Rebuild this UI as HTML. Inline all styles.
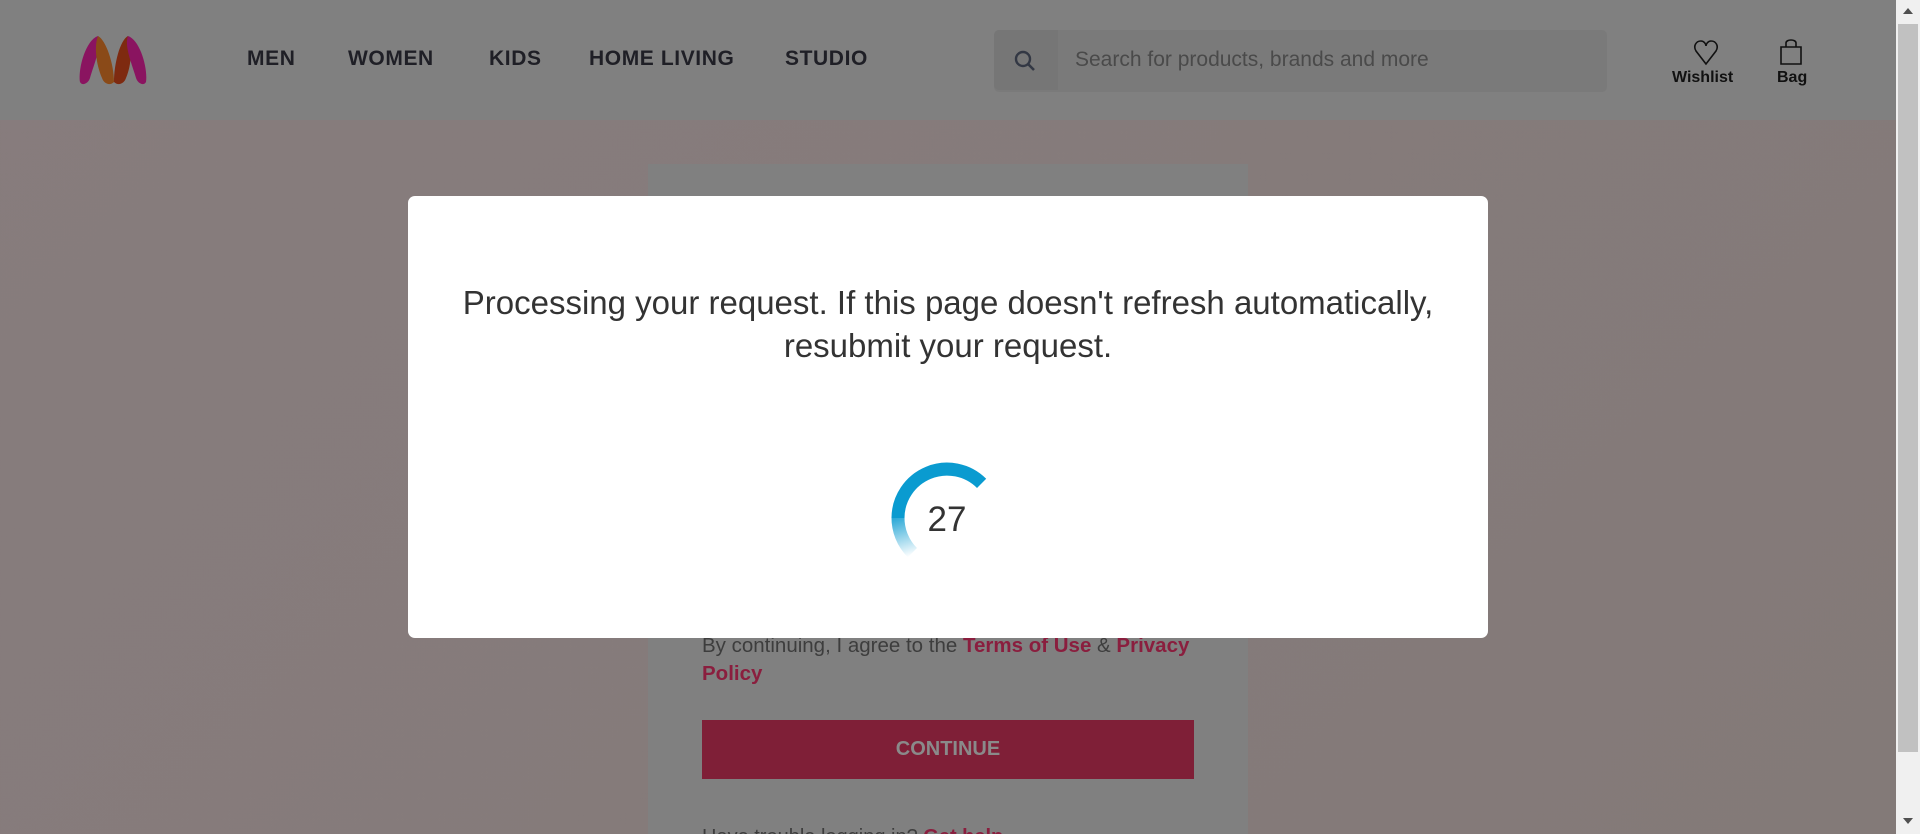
<!DOCTYPE html>
<html style="margin:0;height:834px;overflow:hidden"><head><meta charset="utf-8"><style>
body{margin:0;width:1920px;height:834px;overflow:hidden;position:relative;font-family:"Liberation Sans",sans-serif;background:linear-gradient(135deg,#877c7d,#837a78);}
.hdr{position:absolute;left:0;top:0;width:1896px;height:120px;background:#808080;}
.nav{position:absolute;top:47px;font-size:21px;color:#1f1f26;letter-spacing:0.6px;font-weight:bold}
.srch{position:absolute;left:994px;top:30px;width:613px;height:62px;background:#7a7a7a;border-radius:5px}
.srchi{position:absolute;left:994px;top:30px;width:64px;height:60px;background:#767676;border-radius:5px 0 0 5px}
.card{position:absolute;left:648px;top:164px;width:600px;height:670px;background:#808080}
.modal{position:absolute;left:408px;top:196px;width:1080px;height:442px;background:#fff;border-radius:7px}
.sb{position:absolute;left:1896px;top:0;width:24px;height:834px;background:#f0f0f0}
</style></head><body>
<div class="hdr"></div>
<svg style="position:absolute;left:76px;top:34px" width="76" height="52" viewBox="0 0 76 52">
<path d="M22 2 C10 6 2 34 4 48 C6 52 12 50 14 44 C18 30 26 12 22 2 Z" fill="#8a1460"/>
<path d="M22 2 C30 6 38 30 38 48 C34 52 28 50 26 44 C20 30 18 12 22 2 Z" fill="#8a4a18"/>
<path d="M52 2 C44 6 38 30 38 48 C42 52 48 50 50 44 C56 30 56 12 52 2 Z" fill="#7e2a10"/>
<path d="M52 2 C64 6 72 34 70 48 C68 52 62 50 60 44 C56 30 48 12 52 2 Z" fill="#8a1460"/>
</svg>
<div class="nav" style="left:247px">MEN</div>
<div class="nav" style="left:348px">WOMEN</div>
<div class="nav" style="left:489px">KIDS</div>
<div class="nav" style="left:589px">HOME LIVING</div>
<div class="nav" style="left:785px">STUDIO</div>
<div class="srch"></div><div class="srchi"></div>
<svg style="position:absolute;left:1013px;top:49px" width="24" height="24" viewBox="0 0 24 24"><circle cx="10" cy="10" r="7" fill="none" stroke="#333844" stroke-width="2.4"/><path d="M15 15 L21 21" stroke="#333844" stroke-width="2.6"/></svg>
<div style="position:absolute;left:1075px;top:48px;font-size:21px;color:#4a4a4a">Search for products, brands and more</div>
<svg style="position:absolute;left:1693px;top:40px" width="26" height="26" viewBox="0 0 26 26"><path d="M13 24 L3 11 C0 6 3 1 8 1 C11 1 13 4 13 6 C13 4 15 1 18 1 C23 1 26 6 23 11 Z" fill="none" stroke="#111" stroke-width="1.6"/></svg>
<div style="position:absolute;left:1672px;top:69px;font-size:16px;font-weight:bold;color:#111">Wishlist</div>
<svg style="position:absolute;left:1778px;top:38px" width="26" height="28" viewBox="0 0 26 28"><path d="M3 9 H23 V26 H3 Z M8 9 V5 C8 1 18 1 18 5 V9" fill="none" stroke="#111" stroke-width="1.6"/></svg>
<div style="position:absolute;left:1777px;top:69px;font-size:16px;font-weight:bold;color:#111">Bag</div>
<div class="card"></div>
<div style="position:absolute;left:702px;top:632px;width:520px;font-size:20.5px;line-height:28px;color:#3d3d3d">By continuing, I agree to the <b style="color:#8a1e3e">Terms of Use</b> &amp; <b style="color:#8a1e3e">Privacy</b><br><b style="color:#8a1e3e">Policy</b></div>
<div style="position:absolute;left:702px;top:720px;width:492px;height:59px;background:#7f1f37;color:#8a8a8a;font-weight:bold;font-size:20px;text-align:center;line-height:59px">CONTINUE</div>
<div style="position:absolute;left:702px;top:826px;font-size:20px;color:#3d3d3d">Have trouble logging in? <b style="color:#8a1e3e">Get help</b></div>
<div class="modal"></div>
<div style="position:absolute;left:408px;top:281px;width:1080px;text-align:center;font-size:33px;line-height:43px;color:#333">Processing your request. If this page doesn't refresh automatically,<br>resubmit your request.</div>
<svg style="position:absolute;left:0;top:0" width="1920" height="834">
<defs><linearGradient id="g" gradientUnits="userSpaceOnUse" x1="898" y1="510" x2="912" y2="556"><stop offset="0" stop-color="#0a9bd0"/><stop offset="1" stop-color="#0a9bd0" stop-opacity="0"/></linearGradient></defs>
<path d="M981.6 483.4 A49 49 0 0 0 898 518" fill="none" stroke="#0a9bd0" stroke-width="13"/>
<path d="M898 517 A49 49 0 0 0 912.4 552.6" fill="none" stroke="url(#g)" stroke-width="13"/>
<text x="947" y="531" font-size="35" text-anchor="middle" fill="#333" font-family="Liberation Sans">27</text>
</svg>
<div class="sb"><div style="position:absolute;left:2px;top:24px;width:20px;height:728px;background:#c1c1c1"></div>
<div style="position:absolute;left:7px;top:8px;border:5px solid transparent;border-bottom:6px solid #505050;border-top:0"></div>
<div style="position:absolute;left:7px;top:818px;border:5px solid transparent;border-top:6px solid #505050;border-bottom:0"></div></div>
</body></html>
